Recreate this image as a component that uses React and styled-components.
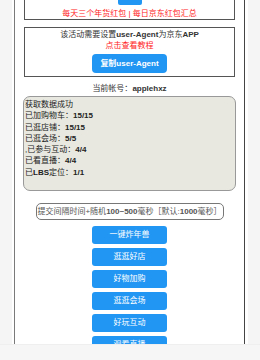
import React from 'react'
import styled, { createGlobalStyle } from 'styled-components'

const GlobalStyle = createGlobalStyle`
  html, body {
    margin: 0;
    padding: 0;
    background: #f5f5f5;
    overflow: hidden;
  }
  body {
    font-family: "Liberation Sans", "Noto Sans CJK SC", sans-serif;
    font-size: 8px;
    color: #222;
  }
`

const Frame = styled.div`
  width: 236px;
  min-height: 360px;
  margin-left: 12px;
  background: #fff;
  box-sizing: border-box;
  padding-left: 2px;
`

const Panel = styled.div`
  width: 231px;
  min-height: 360px;
  box-sizing: border-box;
  border-left: 1px solid #7a7a7a;
  border-right: 1px solid #444;
  padding: 0 9px;
`

const TopBox = styled.div`
  border: 1px solid #555;
  border-top: none;
  text-align: center;
`

const TopStripe = styled.div`
  width: 24px;
  height: 5px;
  margin: 0 auto;
  background: #2196f3;
  border-radius: 0 0 2px 2px;
`

const RedLine = styled.div`
  color: #f22;
  line-height: 11px;
  padding-top: ${props => props.pt || 0};
`

const UABox = styled.div`
  margin-top: 7px;
  border: 1px solid #555;
  text-align: center;
  padding: 1px 0 3px;
  line-height: 11px;
  color: #333;
`

const CopyButton = styled.div`
  width: 75px;
  height: 19px;
  margin: 3px auto 0;
  border-radius: 4px;
  background: #2196f3;
  color: #fff;
  font-weight: bold;
  line-height: 19px;
`

const Account = styled.div`
  margin-top: 6px;
  text-align: center;
  line-height: 11px;
  color: #333;
`

const DataBox = styled.div`
  margin: 2px -1px 0;
  height: 95px;
  box-sizing: border-box;
  border: 1px solid #999;
  border-radius: 7px;
  background: #e8e8e0;
  padding: 2px 1px;
  line-height: 11.3px;
  color: #222;
`

const IntervalField = styled.div`
  width: 188px;
  height: 17px;
  margin: 12px auto 0;
  box-sizing: border-box;
  border: 1px solid #777;
  border-radius: 5px;
  color: #555;
  line-height: 15px;
  text-align: center;
  white-space: nowrap;
  overflow: hidden;
`

const ButtonList = styled.div`
  margin-top: 6px;
  display: flex;
  flex-direction: column;
  align-items: center;
  gap: 4px;
`

const ActionButton = styled.div`
  width: 75px;
  height: 18px;
  border-radius: 3px;
  background: #2196f3;
  color: #fff;
  text-align: center;
  line-height: 18px;
`

const Footer = styled.div`
  position: fixed;
  left: 0;
  right: 0;
  bottom: 0;
  height: 15px;
  background: #f6f6f6;
  border-top: 1px solid #efefef;
`

const stats = [
  ['已加购物车：', '15/15'],
  ['已逛店铺：', '15/15'],
  ['已逛会场：', '5/5'],
  [',已参与互动：', '4/4'],
  ['已看直播：', '4/4']
]

const actions = ['一键炸年兽', '逛逛好店', '好物加购', '逛逛会场', '好玩互动', '观看直播']

const App = () => (
  <>
    <GlobalStyle />
    <Frame>
      <Panel>
        <TopBox>
          <TopStripe />
          <RedLine pt="3px">每天三个年货红包 | 每日京东红包汇总</RedLine>
        </TopBox>
        <UABox>
          <div>
            该活动需要设置<b>user-Agent</b>为京东<b>APP</b>
          </div>
          <RedLine>点击查看教程</RedLine>
          <CopyButton>复制user-Agent</CopyButton>
        </UABox>
        <Account>
          当前帐号：<b>applehxz</b>
        </Account>
        <DataBox>
          <div>获取数据成功</div>
          {stats.map(([label, value]) => (
            <div key={label}>
              {label}
              <b>{value}</b>
            </div>
          ))}
          <div>
            已<b>LBS</b>定位：<b>1/1</b>
          </div>
        </DataBox>
        <IntervalField>
          提交间隔时间+随机<b>100~500</b>毫秒［默认:<b>1000</b>毫秒］
        </IntervalField>
        <ButtonList>
          {actions.map(a => (
            <ActionButton key={a}>{a}</ActionButton>
          ))}
        </ButtonList>
      </Panel>
    </Frame>
    <Footer />
  </>
)

export default App
